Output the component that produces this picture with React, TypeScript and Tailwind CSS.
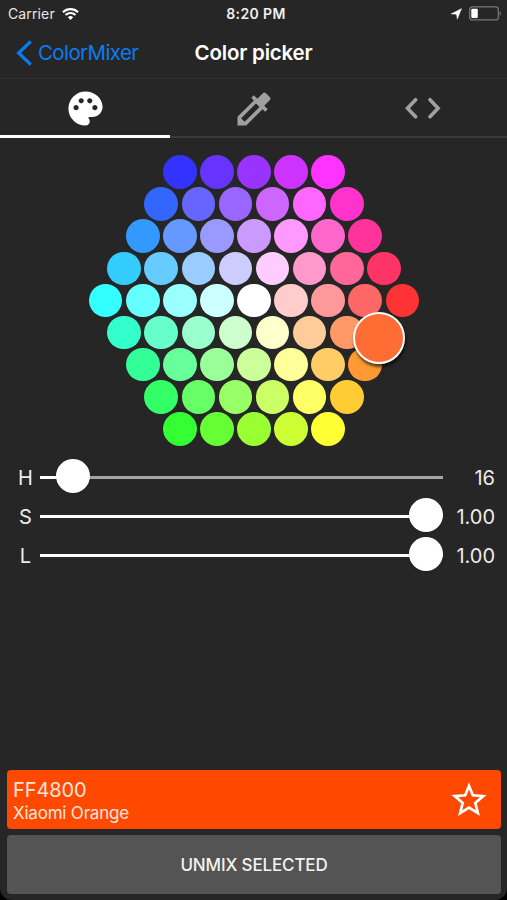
import { MdColorize, MdPalette } from "react-icons/md";

const rows = [
  ["#3333ff", "#6633ff", "#9933ff", "#cc33ff", "#ff33ff"],
  ["#3366ff", "#6666ff", "#9966ff", "#cc66ff", "#ff66ff", "#ff33cc"],
  ["#3399ff", "#6699ff", "#9999ff", "#cc99ff", "#ff99ff", "#ff66cc", "#ff3399"],
  ["#33ccff", "#66ccff", "#99ccff", "#ccccff", "#ffccff", "#ff99cc", "#ff6699", "#ff3366"],
  ["#33ffff", "#66ffff", "#99ffff", "#ccffff", "#ffffff", "#ffcccc", "#ff9999", "#ff6666", "#ff3333"],
  ["#33ffcc", "#66ffcc", "#99ffcc", "#ccffcc", "#ffffcc", "#ffcc99", "#ff9966", "#ff6633"],
  ["#33ff99", "#66ff99", "#99ff99", "#ccff99", "#ffff99", "#ffcc66", "#ff9933"],
  ["#33ff66", "#66ff66", "#99ff66", "#ccff66", "#ffff66", "#ffcc33"],
  ["#33ff33", "#66ff33", "#99ff33", "#ccff33", "#ffff33"],
];

const selected = "#ff6633";

const StatusBar = () => (
  <div className="grid h-[27px] grid-cols-3 items-center text-[14px] text-[#e6e6e6]">
    <div className="flex items-center gap-[7px] pl-[8px]">
      <span className="tracking-[0.13px]">Carrier</span>
      <svg className="h-[12px] w-[17px]" viewBox="0 0 17 12" fill="none" stroke="#fff" strokeWidth="2.1">
        <path d="M0.9 4.3a10.8 10.8 0 0 1 15.2 0M3.5 7a7.1 7.1 0 0 1 10 0" />
        <path d="M8.5 11.9 5.8 9.2a3.9 3.9 0 0 1 5.4 0z" fill="#fff" stroke="none" />
      </svg>
    </div>
    <span className="pl-[5px] text-center font-semibold tracking-[0.4px] whitespace-nowrap text-[#f0f0f0]">
      8:20 PM
    </span>
    <div className="flex items-center justify-end gap-[7px] pr-[6px]">
      <svg className="h-[12px] w-[12px]" viewBox="0 0 12 12" fill="#fff">
        <path d="M11.6 0.6 7.3 11.2 6.4 6.2 1 5.9z" stroke="#fff" strokeWidth="0.4" />
      </svg>
      <svg className="h-[15px] w-[32px]" viewBox="0 0 32 15" fill="none">
        <rect x="0.7" y="0.9" width="28.6" height="13" rx="2.5" stroke="#757575" strokeWidth="1.3" />
        <rect x="2.3" y="2.7" width="6.5" height="9.4" rx="1" fill="#fff" />
        <path d="M30.6 5v4.8q1.4-.8 1.4-2.4t-1.4-2.4z" fill="#757575" />
      </svg>
    </div>
  </div>
);

const Header = () => (
  <header className="grid h-[52px] grid-cols-3 items-center border-b border-[#303030] pt-px text-[20.5px]">
    <button className="flex items-center gap-[6px] pl-[16px] text-[#0a7cf0]">
      <svg className="h-[26px] w-[16px]" viewBox="0 0 16 26" fill="none" stroke="currentColor" strokeWidth="3.2">
        <path d="M14.8 1.3 2.6 13l12.2 11.7" />
      </svg>
      <span className="tracking-[-0.6px]">ColorMixer</span>
    </button>
    <h1 className="text-center font-semibold tracking-[-0.2px] whitespace-nowrap text-white">Color picker</h1>
  </header>
);

const Tabs = () => (
  <div className="grid h-[59px] grid-cols-[170px_168px_1fr] text-[#a0a0a0]">
    <button className="flex items-center justify-center border-b-[3px] border-white pt-[2px] text-white">
      <MdPalette className="size-[41px]" />
    </button>
    <button className="flex items-center justify-center border-b-2 border-[#3a3a3a] pt-[2px]">
      <MdColorize className="size-[44px]" />
    </button>
    <button className="flex items-center justify-center border-b-2 border-[#3a3a3a] pt-px">
      <svg
        className="h-[22px] w-[36px]"
        viewBox="0 0 36 22"
        fill="none"
        stroke="currentColor"
        strokeWidth="3.6"
        strokeLinecap="round"
      >
        <path d="M10.6 2.7 2.5 11.2l8.1 8.5M25 2.7l8.1 8.5-8.1 8.5" />
      </svg>
    </button>
  </div>
);

const ColorHexagon = () => (
  <div className="mt-[18px] flex flex-col pl-px">
    {rows.map((row, i) => (
      <div key={i} className="flex h-[32.1px] items-center justify-center gap-[3.5px]">
        {row.map((color) => (
          <div
            key={color}
            className="relative size-[33.6px] shrink-0 rounded-full"
            style={{ backgroundColor: color }}
          >
            {color === selected && (
              <div className="absolute -top-[3.3px] -left-[14.4px] z-10 size-[52px] rounded-full border-[2.5px] border-white bg-[#ff6d34] shadow-[1px_3px_3px_rgba(0,0,0,0.65)]" />
            )}
          </div>
        ))}
      </div>
    ))}
  </div>
);

type SliderProps = { label: string; value: string; percent: number };

const Slider = ({ label, value, percent }: SliderProps) => (
  <div className="flex h-[39px] items-center pr-[12px] pl-[15px] text-[20px] text-[#ececec]">
    <span className="w-[21px] pt-[2px] text-center">{label}</span>
    <div className="relative ml-[4px] h-[3px] w-[403px] bg-[#a5a5a5]">
      <div className="h-full bg-white" style={{ width: `${percent}%` }} />
      <div
        className="absolute -top-[17px] size-[34px] -translate-x-1/2 rounded-full bg-white shadow-[0_1px_3px_rgba(0,0,0,0.15)]"
        style={{ left: `${percent}%` }}
      />
    </div>
    <span className="flex-1 pt-[2px] text-right">{value}</span>
  </div>
);

export default function App() {
  return (
    <div className="h-[900px] w-[507px] bg-black font-['Inter',sans-serif]">
      <div className="flex h-full flex-col overflow-hidden rounded-b-[12px] bg-[#262626]">
        <StatusBar />
        <Header />
        <Tabs />
        <ColorHexagon />
        <div className="mt-[13px]">
          <Slider label="H" value="16" percent={8.2} />
          <Slider label="S" value="1.00" percent={95.9} />
          <Slider label="L" value="1.00" percent={95.9} />
        </div>
        <div className="mt-auto flex flex-col gap-[6px] pr-[6px] pb-[6px] pl-[7px]">
          <div className="flex h-[59px] items-center justify-between rounded-[4px] bg-[#ff4800] pr-[14px] pl-[6px] text-[#ffe5dc]">
            <div className="pt-[2px]">
              <p className="text-[20px] leading-[24px] tracking-[-0.1px]">FF4800</p>
              <p className="text-[17px] leading-[22px] tracking-[-0.2px]">Xiaomi Orange</p>
            </div>
            <svg className="h-[35px] w-[36px]" viewBox="0 0 36 35" fill="none" stroke="#fff" strokeWidth="2.7">
              <path d="M18 3.8 21.8 13.3 32.2 14.1 24.3 20.9 26.9 31.2 18 25.7 9.1 31.2 11.7 20.9 3.8 14.1 14.2 13.3z" />
            </svg>
          </div>
          <button className="h-[59px] rounded-[4px] bg-[#545454] pt-[2px] text-[17px] font-medium tracking-[-0.15px] text-[#f2f2f2]">
            UNMIX SELECTED
          </button>
        </div>
      </div>
    </div>
  );
}
